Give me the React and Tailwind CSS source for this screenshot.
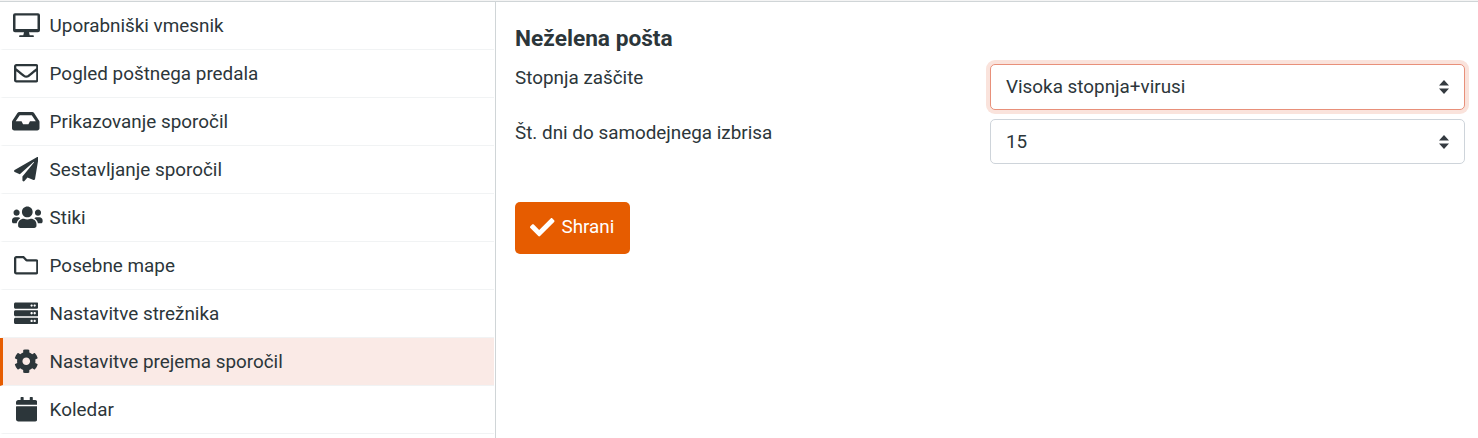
import React, { useState } from 'react';
import {
  FaRegEnvelope,
  FaInbox,
  FaPaperPlane,
  FaUsers,
  FaRegFolder,
  FaServer,
  FaCog,
  FaCalendar,
  FaCheck,
} from 'react-icons/fa';

const MonitorIcon = ({ className }) => (
  <svg viewBox="0 0 27 24" fill="currentColor" className={className}>
    <path
      fillRule="evenodd"
      d="M2 0h23a2 2 0 0 1 2 2v15a2 2 0 0 1-2 2h-9l.7 3h3.3a.8.8 0 0 1 0 1.8H7A.8.8 0 0 1 7 22h3.300l.7-3H2a2 2 0 0 1-2-2V2a2 2 0 0 1 2-2zm.5 2.200v13.600h22V2.200z"
    />
  </svg>
);

const sections = [
  { id: 'ui', label: 'Uporabniški vmesnik', icon: MonitorIcon, iconClass: 'w-[27px]' },
  { id: 'mailbox', label: 'Pogled poštnega predala', icon: FaRegEnvelope, iconClass: 'w-[24.5px]' },
  { id: 'display', label: 'Prikazovanje sporočil', icon: FaInbox, iconClass: 'w-[27.5px]' },
  { id: 'compose', label: 'Sestavljanje sporočil', icon: FaPaperPlane, iconClass: 'w-[24.5px]' },
  { id: 'contacts', label: 'Stiki', icon: FaUsers, iconClass: 'w-[30.6px] ml-[3px]' },
  { id: 'folders', label: 'Posebne mape', icon: FaRegFolder, iconClass: 'w-[24.5px]' },
  { id: 'server', label: 'Nastavitve strežnika', icon: FaServer, iconClass: 'w-[24.5px]' },
  { id: 'incoming', label: 'Nastavitve prejema sporočil', icon: FaCog, iconClass: 'w-[24.5px]' },
  { id: 'calendar', label: 'Koledar', icon: FaCalendar, iconClass: 'w-[21.4px] ml-px' },
];

const SelectField = ({ value, focused }) => (
  <div
    className={`flex w-[475px] items-center justify-between rounded-[5px] border bg-white pl-[15px] pr-[15px] ${
      focused ? 'h-[46px] border-[#e8907a] ring-4 ring-[#fae3dc]' : 'h-[45px] border-[#ced4da]'
    }`}
  >
    <span className={focused ? '' : 'pt-px'}>{value}</span>
    <svg viewBox="0 0 4 5" className="h-[14px] w-[10px]" preserveAspectRatio="none">
      <path fill="#343a40" d="M2 0L0 2h4zm0 5L0 3h4z" />
    </svg>
  </div>
);

const App = () => {
  const [active, setActive] = useState('incoming');

  return (
    <div className="flex h-[438px] w-full flex-col overflow-hidden bg-white font-[Roboto,sans-serif] text-[18.88px] text-[#2c363a]">
      <div className="h-0.5 shrink-0 border-b border-[#d0d5d7] bg-[#f4f4f4]" />
      <div className="flex min-h-0 grow">
        <ul className="w-[496px] shrink-0 border-r border-[#d0d5d7] pr-px">
          {sections.map(({ id, label, icon: Icon, iconClass }) => (
            <li
              key={id}
              onClick={() => setActive(id)}
              className={`flex h-12 cursor-pointer items-center border-b border-l-[3px] border-b-[#f1f3f4] pl-[7px] ${
                active === id ? 'border-l-[#e65c00] bg-[#faeae6]' : 'border-l-transparent'
              }`}
            >
              <span className="flex w-8 shrink-0 justify-center">
                <Icon className={`h-[24.5px] shrink-0 ${iconClass}`} />
              </span>
              <span className="ml-[7.6px] whitespace-nowrap pt-px">{label}</span>
            </li>
          ))}
        </ul>

        <div className="grow pl-[19px] pr-[13px] pt-[21px]">
          <h2 className="text-[22.7px] font-bold leading-8">Neželena pošta</h2>
          <div className="mt-[9px] flex items-start justify-between">
            <label className="mt-0.5 leading-6">Stopnja zaščite</label>
            <SelectField value="Visoka stopnja+virusi" focused />
          </div>
          <div className="mt-[9px] flex items-start justify-between">
            <label className="mt-0.5 leading-6">Št. dni do samodejnega izbrisa</label>
            <SelectField value="15" />
          </div>
          <button className="mt-[38px] flex h-[52px] w-[115px] items-center rounded-[5px] bg-[#e65c00] pb-0.5 pl-[15px] text-white">
            <FaCheck className="h-[24.5px] w-[24.5px]" />
            <span className="ml-[7px]">Shrani</span>
          </button>
        </div>
      </div>
    </div>
  );
};

export default App;
